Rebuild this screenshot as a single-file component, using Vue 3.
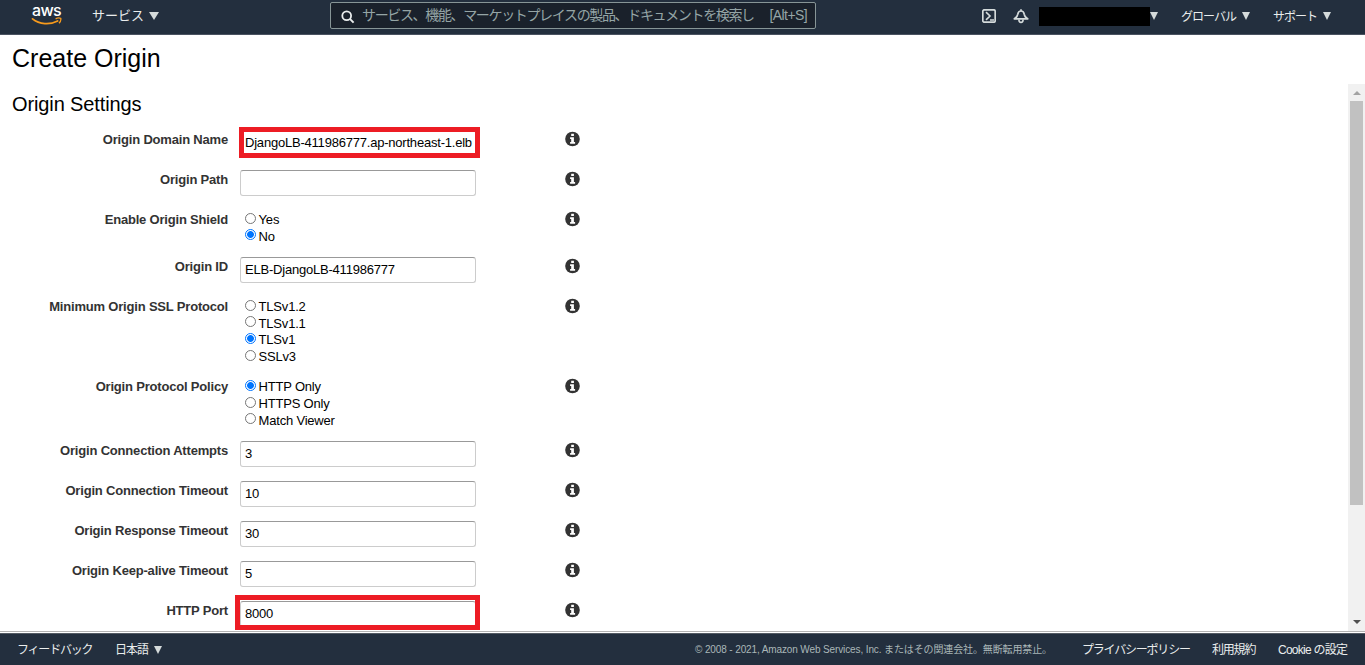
<template>
  <div class="console">
    <header class="navBar">
      <div class="awsLogo">
        <span class="awsText">aws</span>
        <svg class="awsSmile" width="31" height="9" viewBox="0 0 31 9">
          <path d="M1.5 1.9C8.5 7.6 19 8 26.6 4" fill="none" stroke="#f79a1c" stroke-width="1.8" stroke-linecap="round" />
          <path d="M24.6 1.8C26.6 0.8 28.8 0.9 29.8 1.4C30.1 3 29.3 4.9 28 6.2" fill="none" stroke="#f79a1c" stroke-width="1.3" />
        </svg>
      </div>
      <div class="navItem services"><span class="servicesText">サービス</span><i class="caret"></i></div>
      <div class="searchBox">
        <svg class="searchIcon" width="14" height="14" viewBox="0 0 14 14">
          <circle cx="5.7" cy="5.7" r="4.4" fill="none" stroke="#eaeded" stroke-width="1.8" />
          <path d="M8.9 8.9L12.6 12.6" stroke="#eaeded" stroke-width="2" />
        </svg>
        <span class="searchText">サービス、機能、マーケットプレイスの製品、ドキュメントを検索し</span>
        <span class="shortcut">[Alt+S]</span>
      </div>
      <svg class="shellIcon" width="14" height="14" viewBox="0 0 14 14">
        <rect x="0.8" y="0.8" width="12.4" height="12.4" rx="1.5" fill="none" stroke="#d5dbdb" stroke-width="1.7" />
        <path d="M4 3.2L8 7L4 10.8M8 11H12" fill="none" stroke="#d5dbdb" stroke-width="1.6" />
      </svg>
      <svg class="bellIcon" width="16" height="15" viewBox="0 0 16 15">
        <path d="M8 0.3V2M1.3 9.8C3.6 8.8 4.4 7.4 4.8 5.2C5.1 3.2 6.2 2 8 2C9.8 2 10.9 3.2 11.2 5.2C11.6 7.4 12.4 8.8 14.7 9.8Z" fill="none" stroke="#d5dbdb" stroke-width="1.7" stroke-linejoin="round" />
        <path d="M5.9 10.4C5.9 14.4 10.1 14.4 10.1 10.4" fill="none" stroke="#d5dbdb" stroke-width="1.6" />
      </svg>
      <div class="account"></div>
      <i class="caret accountCaret"></i>
      <div class="navItem region"><span class="regionText">グローバル</span><i class="caret"></i></div>
      <div class="navItem support"><span class="supportText">サポート</span><i class="caret"></i></div>
    </header>

    <h1>Create Origin</h1>

    <main class="content">
      <div class="formArea">
        <h2>Origin Settings</h2>
        <div v-for="row in rows" :key="row.label" class="formRow">
          <label class="rowLabel">{{ row.label }}</label>
          <div class="rowField">
            <div v-if="row.options" class="radioGroup">
              <div v-for="opt in row.options" :key="opt" class="radioItem" @click="row.value = opt">
                <span :class="['radio', row.value === opt ? 'checked' : '']"></span>
                <span class="radioText">{{ opt }}</span>
              </div>
            </div>
            <input v-else v-model="row.value" type="text" :class="['textInput', row.mark === 'markDomain' ? 'domainInput' : '']" />
            <div v-if="row.mark" :class="['mark', row.mark]"></div>
          </div>
          <svg class="infoIcon" width="15" height="16" viewBox="0 0 15 16">
            <circle cx="7.5" cy="8" r="7.3" fill="#333" />
            <path d="M6.2 2.8H8.9V5H6.2ZM5.1 6.2H8.9V10.9H10.1V12.7H5.1V10.9H6.2V7.9H5.1Z" fill="#fff" />
          </svg>
        </div>
      </div>
      <div class="scrollBar">
        <i class="arrowUp"></i>
        <div class="thumb"></div>
        <i class="arrowDown"></i>
      </div>
    </main>

    <footer class="footBar">
      <span class="feedback">フィードバック</span>
      <div class="navItem language"><span>日本語</span><i class="caret"></i></div>
      <span class="copyright">© 2008 - 2021, Amazon Web Services, Inc. またはその関連会社。無断転用禁止。</span>
      <span class="privacy">プライバシーポリシー</span>
      <span class="terms">利用規約</span>
      <span class="cookie">Cookie の設定</span>
    </footer>
  </div>
</template>

<script setup>
import { ref } from 'vue'

const rows = ref([
  { label: 'Origin Domain Name', value: 'DjangoLB-411986777.ap-northeast-1.elb', mark: 'markDomain' },
  { label: 'Origin Path', value: '' },
  { label: 'Enable Origin Shield', value: 'No', options: ['Yes', 'No'] },
  { label: 'Origin ID', value: 'ELB-DjangoLB-411986777' },
  { label: 'Minimum Origin SSL Protocol', value: 'TLSv1', options: ['TLSv1.2', 'TLSv1.1', 'TLSv1', 'SSLv3'] },
  { label: 'Origin Protocol Policy', value: 'HTTP Only', options: ['HTTP Only', 'HTTPS Only', 'Match Viewer'] },
  { label: 'Origin Connection Attempts', value: '3' },
  { label: 'Origin Connection Timeout', value: '10' },
  { label: 'Origin Response Timeout', value: '30' },
  { label: 'Origin Keep-alive Timeout', value: '5' },
  { label: 'HTTP Port', value: '8000', mark: 'markPort' }
])
</script>

<style>
body {
  margin: 0;
  overflow: hidden;
}
</style>

<style scoped>
.console {
  width: 100%;
  height: 100vh;
  display: flex;
  flex-direction: column;
  overflow: hidden;
  background: #fff;
  font-family: "Liberation Sans", "Noto Sans CJK JP", sans-serif;
  font-size: 13px;
  color: #000;
}

/* top bar */
.navBar {
  height: 35px;
  flex-shrink: 0;
  box-sizing: border-box;
  display: flex;
  align-items: flex-start;
  background: #232f3e;
  border-bottom: 1px solid #4a5361;
  color: #eaeded;
  white-space: nowrap;
}

.awsLogo {
  width: 31px;
  margin: 1px 0 0 31px;
  display: flex;
  flex-direction: column;
  align-items: center;
}

.awsText {
  height: 16px;
  line-height: 19px;
  font-family: Inter, sans-serif;
  font-size: 16px;
  font-weight: 500;
  letter-spacing: -0.6px;
  color: #fff;
}

.awsSmile {
  display: block;
}

.navItem {
  display: flex;
  align-items: center;
  height: 30px;
}

.caret {
  width: 0;
  height: 0;
  margin-top: 2px;
  border-left: 4.5px solid transparent;
  border-right: 4.5px solid transparent;
  border-top: 8px solid #d5dbdb;
}

.services {
  width: 67px;
  margin-left: 30px;
  justify-content: space-between;
}

.servicesText {
  margin-top: -1px;
}

.services .caret {
  border-left-width: 5px;
  border-right-width: 5px;
}

.searchBox {
  width: 486px;
  height: 27px;
  margin: 2px 0 0 171px;
  padding: 0 8px 0 10px;
  box-sizing: border-box;
  display: flex;
  align-items: center;
  background: #1a212b;
  border: 1px solid #879596;
  border-radius: 2px;
  color: #95a5a6;
  font-size: 14px;
}

.searchIcon {
  margin-top: 3px;
  flex-shrink: 0;
}

.searchText {
  margin: -3px 0 0 7px;
  letter-spacing: -1.35px;
}

.shortcut {
  margin: -2px 0 0 auto;
  letter-spacing: -0.6px;
}

.shellIcon {
  margin: 9px 0 0 166px;
}

.bellIcon {
  margin: 9px 0 0 17px;
}

.account {
  width: 111px;
  height: 19px;
  margin: 7px 0 0 10px;
  background: #000;
}

.accountCaret {
  margin-top: 12px;
}

.region {
  width: 69px;
  margin-left: 23px;
  justify-content: space-between;
}

.support {
  width: 58px;
  margin-left: 23px;
  justify-content: space-between;
}

.regionText,
.supportText {
  font-size: 12px;
  letter-spacing: -1px;
}

/* headings */
h1 {
  height: 49px;
  flex-shrink: 0;
  margin: 0;
  padding-left: 12px;
  line-height: 46px;
  font-size: 25px;
  font-weight: normal;
}

h2 {
  height: 46px;
  margin: 0;
  padding-left: 12px;
  line-height: 40px;
  font-size: 20px;
  font-weight: normal;
  letter-spacing: -0.12px;
}

/* form */
.content {
  height: 547px;
  flex-shrink: 0;
  display: flex;
  overflow: hidden;
}

.formArea {
  flex: 1;
}

.formRow {
  display: flex;
  align-items: flex-start;
  padding-bottom: 14px;
}

.rowLabel {
  width: 228px;
  text-align: right;
  line-height: 19px;
  font-weight: bold;
  letter-spacing: -0.19px;
  color: #333;
}

.rowField {
  position: relative;
  width: 236px;
  margin-left: 12px;
}

.textInput {
  display: block;
  width: 236px;
  height: 26px;
  box-sizing: border-box;
  padding: 0 4px;
  border: 1px solid #ccc;
  border-top-color: #999;
  border-radius: 3px;
  outline: none;
  background: #fff;
  font-family: inherit;
  font-size: 13px;
  letter-spacing: -0.21px;
  color: #000;
}

.domainInput {
  padding: 0 0 2px 4px;
}

.radioGroup {
  padding-left: 5px;
  margin-bottom: -0.34px;
}

.radioItem {
  display: flex;
  align-items: flex-start;
  height: 16.67px;
}

.radio {
  width: 11px;
  height: 11px;
  margin-top: 2.6px;
  box-sizing: border-box;
  border: 1px solid #767676;
  border-radius: 50%;
  background: #fff;
}

.radio.checked {
  border-color: #0075ff;
  background: radial-gradient(circle, #0075ff 0, #0075ff 3px, #fff 3.8px);
}

.radioText {
  margin-left: 2.6px;
  line-height: 19px;
  letter-spacing: -0.2px;
}

.infoIcon {
  margin: 1px 0 0 89.3px;
}

/* red emphasis frames around fields */
.mark {
  position: absolute;
  box-sizing: border-box;
  border: 5px solid #ed1c24;
  pointer-events: none;
}

.markDomain {
  left: -1px;
  top: -3px;
  width: 241px;
  height: 31px;
}

.markPort {
  left: -5px;
  top: -6px;
  width: 245px;
  height: 35px;
}

/* scroll bar */
.scrollBar {
  width: 17px;
  display: flex;
  flex-direction: column;
  align-items: center;
  background: #f1f1f1;
}

.arrowUp {
  margin-top: 7px;
  border-left: 4px solid transparent;
  border-right: 4px solid transparent;
  border-bottom: 4px solid #a3a3a3;
}

.thumb {
  width: 13px;
  height: 404px;
  margin-top: 6px;
  background: #c1c1c1;
}

.arrowDown {
  margin-top: 115px;
  border-left: 4px solid transparent;
  border-right: 4px solid transparent;
  border-top: 4px solid #505050;
}

/* bottom bar */
.footBar {
  height: 34px;
  flex-shrink: 0;
  box-sizing: border-box;
  display: flex;
  align-items: center;
  background: #232f3e;
  background-clip: padding-box;
  border-top: 1px solid #b3b3b3;
  box-shadow: inset 0 1px 0 #fff, inset 0 2px 0 #545b64;
  color: #eaeded;
  font-size: 12px;
  white-space: nowrap;
}

.feedback {
  width: 78px;
  margin-left: 17px;
  letter-spacing: -1.2px;
}

.language {
  width: 47px;
  margin-left: 20px;
  justify-content: space-between;
  letter-spacing: -1px;
}

.copyright {
  width: 361px;
  margin-left: 533px;
  font-size: 10px;
  letter-spacing: -0.12px;
  color: #aab7b8;
}

.privacy {
  width: 110px;
  margin-left: 26px;
  letter-spacing: -1.2px;
}

.terms {
  width: 44px;
  margin-left: 20px;
  letter-spacing: -1.2px;
}

.cookie {
  width: 72px;
  margin-left: 22px;
  letter-spacing: -0.75px;
}
</style>
